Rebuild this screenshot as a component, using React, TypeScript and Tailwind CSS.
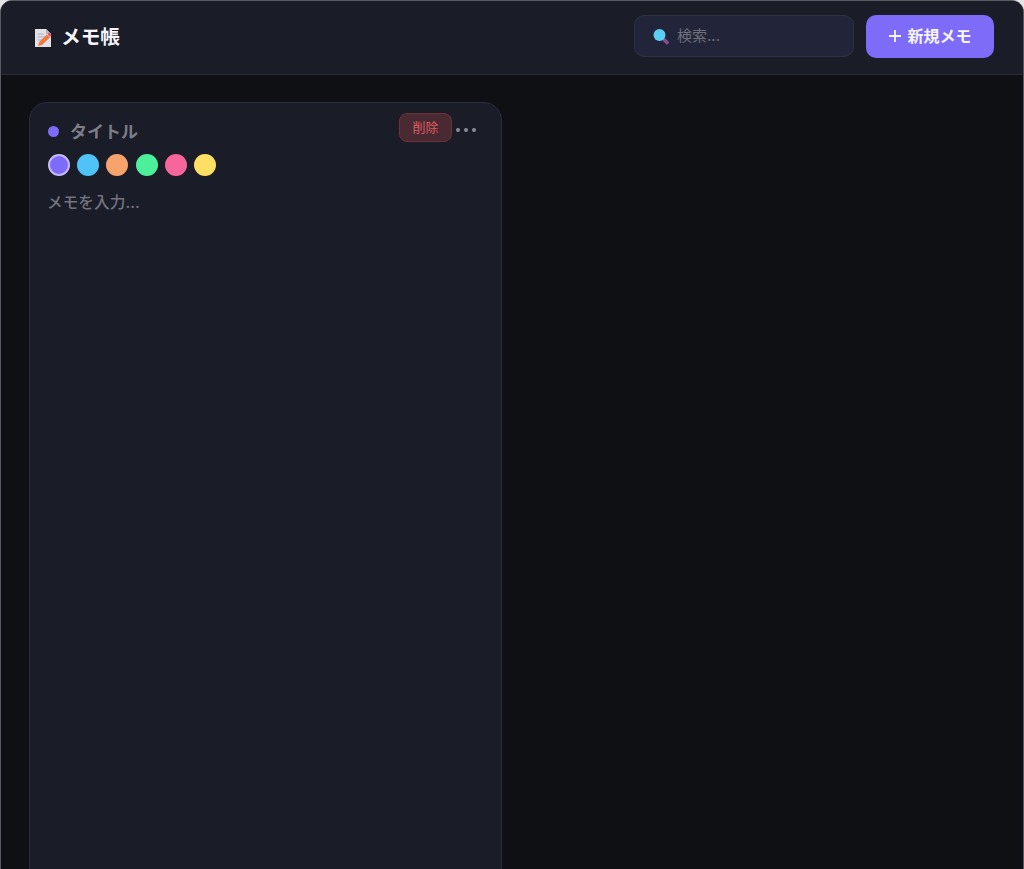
const font = { fontFamily: '"Inter", "Noto Sans CJK JP", sans-serif' };

function NoteIcon() {
  return (
    <svg width="18" height="20" viewBox="0 0 18 20" className="shrink-0">
      <path d="M1 1h11l5 5v13H1z" fill="#e2dfe8" />
      <path d="M12 1l5 5h-5z" fill="#b9b5c4" />
      <path d="M3.5 6h6M3.5 9h10M3.5 12h7" stroke="#b3afbe" strokeWidth="1" />
      <path d="M4 18l1.2-4L13 6.5l3 3L8 17z" fill="#f07a3a" />
      <path d="M13.5 6l1.5-1.5 2.6 2.6L16 9z" fill="#e2506a" />
    </svg>
  );
}

function SearchIcon() {
  return (
    <svg width="16" height="17" viewBox="0 0 16 17" className="shrink-0">
      <path d="M10.5 11l3.5 3.5" stroke="#854c8e" strokeWidth="3.6" strokeLinecap="round" />
      <circle cx="6.5" cy="7" r="6" fill="#5ccff0" />
    </svg>
  );
}

const swatches = ["bg-[#4fc3f7]", "bg-[#f8a26c]", "bg-[#4cf09a]", "bg-[#f8659c]", "bg-[#fddf63]"];

export default function App() {
  return (
    <div style={font} className="h-[869px] w-full overflow-hidden bg-[#e4e4e8]">
      <div className="flex h-[881px] flex-col overflow-hidden rounded-xl border border-[#5a5a62] bg-[#0f1014]">
        <header className="flex h-[74px] shrink-0 items-center justify-between border-b border-[#2a2b38] bg-[#1a1c28] pl-[33px] pr-[29px]">
          <div className="flex items-center gap-[9px]">
            <NoteIcon />
            <span className="text-[19.7px] font-bold leading-none text-[#f5f5fa]">メモ帳</span>
          </div>
          <div className="flex items-center gap-3 pb-[3px]">
            <div className="flex h-[42px] w-[220px] items-center gap-2 rounded-[10px] border border-[#2d3040] bg-[#22253a] pl-[18px]">
              <SearchIcon />
              <span className="text-[15px] text-[#6f7079]">検索...</span>
            </div>
            <button className="flex h-[43px] w-[128px] items-center justify-center gap-[5px] rounded-[10px] bg-[#7e6bf8] text-[16px] font-bold text-[#f5f5fa]">
              <svg width="14" height="14" viewBox="0 0 14 14"><path d="M7 1v12M1 7h12" stroke="#f5f5fa" strokeWidth="1.8" /></svg>
              新規メモ
            </button>
          </div>
        </header>
        <main className="flex-1 px-[28px] pt-[27px]">
          <div className="h-[800px] w-[473px] rounded-[18px] border border-[#2a2b45] bg-[#1a1c28] pl-[18px] pr-[25px] pt-[9px]">
            <div className="flex h-[30px] items-center justify-between">
              <div className="flex items-center gap-[11px] pt-[10px]">
                <span className="-mt-[1px] h-[11px] w-[11px] rounded-full bg-[#7e6bf8]" />
                <span className="text-[17px] font-bold leading-none text-[#7d7e88]">タイトル</span>
              </div>
              <div className="flex items-center gap-[4px]">
                <span className="flex h-[29px] w-[53px] items-center justify-center rounded-lg border border-[#6b3238] bg-[#4a2a32] pt-[1px] text-[13px] text-[#dc5a62]">削除</span>
                <span className="flex gap-[4px] pt-[6px]">
                  <i className="h-[4px] w-[4px] rounded-full bg-[#8a8b94]" />
                  <i className="h-[4px] w-[4px] rounded-full bg-[#8a8b94]" />
                  <i className="h-[4px] w-[4px] rounded-full bg-[#8a8b94]" />
                </span>
              </div>
            </div>
            <div className="mt-[12px] flex items-center gap-[7.2px]">
              <span className="h-[22px] w-[22px] rounded-full border-2 border-[#c4b9fb] bg-[#7e6bf8]" />
              {swatches.map((c) => (
                <span key={c} className={`h-[22px] w-[22px] rounded-full ${c}`} />
              ))}
            </div>
            <p className="-ml-[1px] mt-[15px] text-[15.7px] font-medium leading-[24px] text-[#73747e]">メモを入力...</p>
          </div>
        </main>
      </div>
    </div>
  );
}
